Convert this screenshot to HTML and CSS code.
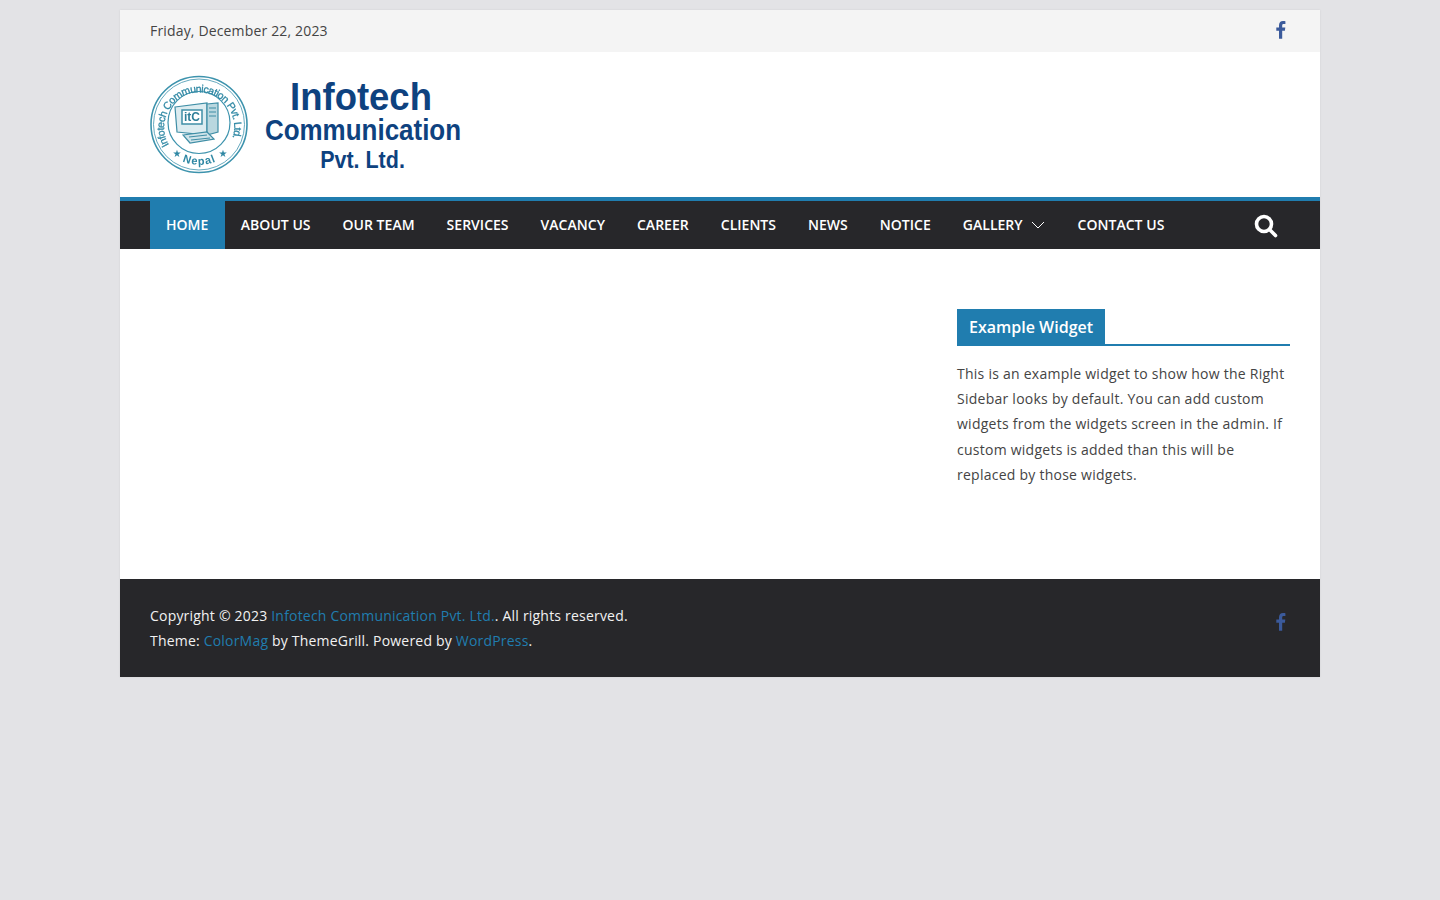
FILE: index.html
```html
<!DOCTYPE html>
<html lang="en">
<head>
<meta charset="utf-8">
<title>Infotech Communication Pvt. Ltd.</title>
<link rel="stylesheet" href="styles.css">
</head>
<body>
<div class="page">
  <div class="topbar">
    <span class="date">Friday, December 22, 2023</span>
    <a class="fb" href="#" aria-label="Facebook"><svg viewBox="0 0 10 18" width="10" height="18"><path d="M9.4 0.2 V3 H7.7 C6.4 3 6.2 3.6 6.2 4.5 V6.6 H9.3 L8.9 9.7 H6.2 V17.8 H3 V9.7 H0.3 V6.6 H3 V4.2 C3 1.5 4.6 0 7 0 C8.1 0 9 0.1 9.4 0.2 Z"/></svg></a>
  </div>
  <header class="brand">
    <svg class="logo" viewBox="0 0 320 106" width="320" height="106" role="img" aria-label="Infotech Communication Pvt. Ltd. logo">
      <defs>
        <path id="arcTop" d="M 19 70 A 35 35 0 1 1 80 69"/>
        <path id="arcBot" d="M 29 84.500 A 42 42 0 0 0 70 84.500"/>
      </defs>
      <g class="seal">
        <g fill="none" stroke="#3d93ad">
          <circle cx="49" cy="49.500" r="48" stroke-width="1.600"/>
          <circle cx="49" cy="49.500" r="45.500" stroke-width="0.800"/>
          <circle cx="49" cy="47.500" r="31" stroke-width="1.200"/>
        </g>
        <text class="seal-text"><textPath href="#arcTop">Infotech Communication Pvt. Ltd.</textPath></text>
        <text class="seal-nepal" text-anchor="middle"><textPath href="#arcBot" startOffset="50%">Nepal</textPath></text>
        <text class="seal-star" x="27" y="82" text-anchor="middle">★</text>
        <text class="seal-star" x="73" y="82" text-anchor="middle">★</text>
        <g fill="none" stroke="#3f8ea6" stroke-width="1.200">
          <path d="M25 32 L57 28 V60 L27 57 Z" fill="#dcecf0"/>
          <rect x="32" y="35" width="20" height="14" fill="#fff" stroke-width="1.500"/>
          <path d="M57 29 L68 28 V57 L57 60 Z" fill="#b9d7df"/>
          <path d="M59 33 H66 M59 37 H66 M59 41 H66"/>
          <path d="M33 60 L57 57 L64 64 L40 68 Z" fill="#cfe3e9"/>
          <path d="M39 62 L57 60 M41 65 L60 63"/>
        </g>
        <text class="seal-itc" x="42" y="46" text-anchor="middle">itC</text>
      </g>
      <text class="name name-1" text-anchor="middle" transform="translate(211 35) scale(.96 1)">Infotech</text>
      <text class="name name-2" text-anchor="middle" transform="translate(213 65) scale(.896 1)">Communication</text>
      <text class="name name-3" text-anchor="middle" transform="translate(212.500 93) scale(.895 1)">Pvt. Ltd.</text>
    </svg>
  </header>
  <nav class="nav">
    <ul class="menu">
      <li class="item active"><a href="#">HOME</a></li>
      <li class="item"><a href="#">ABOUT US</a></li>
      <li class="item"><a href="#">OUR TEAM</a></li>
      <li class="item"><a href="#">SERVICES</a></li>
      <li class="item"><a href="#">VACANCY</a></li>
      <li class="item"><a href="#">CAREER</a></li>
      <li class="item"><a href="#">CLIENTS</a></li>
      <li class="item"><a href="#">NEWS</a></li>
      <li class="item"><a href="#">NOTICE</a></li>
      <li class="item has-sub"><a href="#">GALLERY</a><svg class="chev" viewBox="0 0 14 8" width="14" height="8"><path d="M1 1 L7 7 L13 1"/></svg></li>
      <li class="item"><a href="#">CONTACT US</a></li>
    </ul>
    <svg class="search" viewBox="0 0 24 24" width="24" height="24" aria-label="Search"><circle cx="10" cy="10" r="7.500"/><path d="M15.500 15.500 L21.500 21.500"/></svg>
  </nav>
  <main class="content">
    <div class="primary"></div>
    <aside class="sidebar">
      <h3 class="widget-title"><span>Example Widget</span></h3>
      <p class="widget-text">This is an example widget to show how the Right Sidebar looks by default. You can add custom widgets from the widgets screen in the admin. If custom widgets is added than this will be replaced by those widgets.</p>
    </aside>
  </main>
  <footer class="footer">
    <div class="copy">
      <div>Copyright © 2023 <a href="#">Infotech Communication Pvt. Ltd.</a>. All rights reserved.</div>
      <div>Theme: <a href="#">ColorMag</a> by ThemeGrill. Powered by <a href="#">WordPress</a>.</div>
    </div>
    <a class="fb" href="#" aria-label="Facebook"><svg viewBox="0 0 10 18" width="10" height="18"><path d="M9.4 0.2 V3 H7.7 C6.4 3 6.2 3.6 6.2 4.5 V6.6 H9.3 L8.9 9.7 H6.2 V17.8 H3 V9.7 H0.3 V6.6 H3 V4.2 C3 1.5 4.6 0 7 0 C8.1 0 9 0.1 9.4 0.2 Z"/></svg></a>
  </footer>
</div>
</body>
</html>
```
FILE: styles.css
```css
* { box-sizing: border-box; }
html, body { margin: 0; padding: 0; }
body {
  background: #e3e3e6;
  font-family: "Open Sans", sans-serif;
  font-size: 14px;
  color: #444;
  min-height: 900px;
  padding-top: 10px;
}
a { text-decoration: none; }
.page {
  width: 1200px;
  margin: 0 auto;
  background: #fff;
  box-shadow: 0 0 2px rgba(0,0,0,0.08);
}
.topbar {
  height: 42px;
  background: #f4f4f4;
  padding: 0 30px;
  display: flex;
  align-items: center;
  justify-content: space-between;
}
.date { line-height: 40px; margin-top: -1px; color: #444; letter-spacing: 0.16px; }
.fb { display: flex; margin-right: 4px; }
.fb svg { fill: #3b5a9b; display: block; }
.topbar .fb { margin-top: -3px; }
.brand {
  height: 145px;
  padding: 23px 30px 0;
}
.logo { display: block; }
.seal { filter: blur(0.25px); }
.seal-text { font: 400 10.500px "Liberation Sans", sans-serif; fill: #2f88a4; stroke: #2f88a4; stroke-width: 0.300px; letter-spacing: -0.520px; }
.seal-nepal { font: 700 11px "Liberation Sans", sans-serif; fill: #2f88a4; letter-spacing: 1px; }
.seal-star { font: 10px "DejaVu Sans", sans-serif; fill: #2f88a4; }
.seal-itc { font: 700 12px "Liberation Sans", sans-serif; fill: #2f7f99; }
.name { font-family: "Liberation Sans", sans-serif; font-weight: 700; fill: #0e427f; }
.name-1 { font-size: 38px; }
.name-2 { font-size: 29px; }
.name-3 { font-size: 24px; }
.nav {
  height: 52px;
  background: #27272a;
  border-top: 4px solid #207daf;
  padding: 0 30px;
  display: flex;
  align-items: center;
  justify-content: space-between;
}
.menu {
  list-style: none;
  margin: 0;
  padding: 0;
  display: flex;
  height: 48px;
}
.item {
  display: flex;
  align-items: center;
  padding: 0 16px 1px;
  font-size: 14px;
  font-weight: 600;
  line-height: 47px;
  letter-spacing: 0.02px;
}
.item a { color: #fff; }
.item.active { background: #207daf; padding-right: 16.500px; }
.has-sub { padding-right: 17px; }
.chev { margin-left: 8px; fill: none; stroke: #fff; stroke-width: 1; }
.search { fill: none; stroke: #fff; stroke-width: 3.600; stroke-linecap: round; margin-right: 12px; margin-top: 2px; }
.content {
  height: 330px;
  padding: 60px 30px 0;
  display: flex;
  justify-content: space-between;
}
.sidebar { width: 333px; }
.widget-title {
  margin: 0 0 15px;
  border-bottom: 2px solid #207daf;
  font-size: 16px;
  font-weight: 600;
  line-height: 24px;
  display: flex;
}
.widget-title span {
  background: #207daf;
  color: #fff;
  padding: 6px 12px;
  height: 37px;
  margin-bottom: -2px;
}
.widget-text {
  margin: 0;
  line-height: 25.200px;
  letter-spacing: 0.25px;
  color: #444;
}
.footer {
  height: 98px;
  background: #27272a;
  padding: 24px 30px 0;
  display: flex;
  justify-content: space-between;
  color: #f2f2f2;
}
.copy { line-height: 25px; letter-spacing: 0.2px; }
.copy a { color: #207daf; }
.footer .fb { margin-top: 10px; }
```
